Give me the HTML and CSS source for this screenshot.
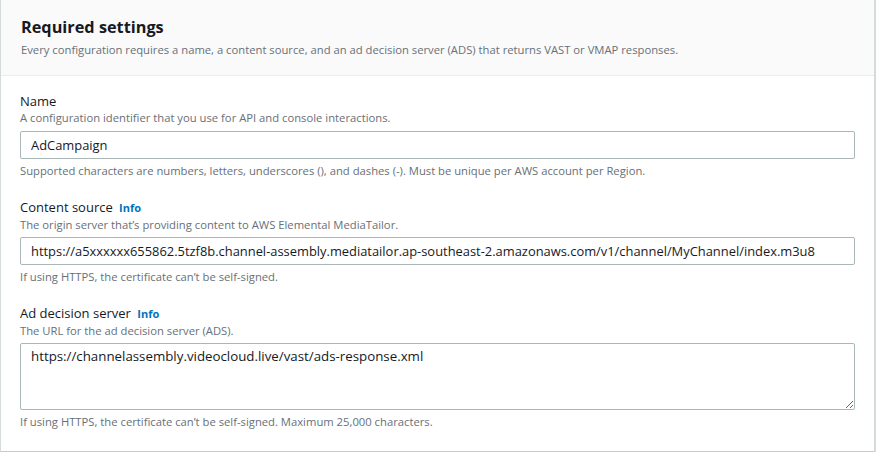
FILE: index.html
```html
<!DOCTYPE html>
<html lang="en">
<head>
<meta charset="utf-8">
<title>Required settings</title>
<link rel="stylesheet" href="styles.css">
</head>
<body>
<div class="card">
  <div class="card-header">
    <h2 class="title">Required settings</h2>
    <p class="subtitle">Every configuration requires a name, a content source, and an ad decision server (ADS) that returns VAST or VMAP responses.</p>
  </div>
  <div class="card-body">
    <div class="field">
      <div class="label">Name</div>
      <div class="desc">A configuration identifier that you use for API and console interactions.</div>
      <input class="input" type="text" value="AdCampaign">
      <div class="hint">Supported characters are numbers, letters, underscores (), and dashes (-). Must be unique per AWS account per Region.</div>
    </div>
    <div class="field">
      <div class="label">Content source <a class="info" href="#">Info</a></div>
      <div class="desc">The origin server that’s providing content to AWS Elemental MediaTailor.</div>
      <input class="input" type="text" value="https://a5xxxxxx655862.5tzf8b.channel-assembly.mediatailor.ap-southeast-2.amazonaws.com/v1/channel/MyChannel/index.m3u8">
      <div class="hint">If using HTTPS, the certificate can’t be self-signed.</div>
    </div>
    <div class="field">
      <div class="label">Ad decision server <a class="info" href="#">Info</a></div>
      <div class="desc">The URL for the ad decision server (ADS).</div>
      <textarea class="textarea">https://channelassembly.videocloud.live/vast/ads-response.xml</textarea>
      <div class="hint">If using HTTPS, the certificate can’t be self-signed. Maximum 25,000 characters.</div>
    </div>
  </div>
</div>
</body>
</html>
```
FILE: styles.css
```css
* { box-sizing: border-box; }
html, body {
  margin: 0;
  padding: 0;
  background: #ffffff;
}
body {
  font-family: "Open Sans", "Liberation Sans", Arial, sans-serif;
  color: #16191f;
  width: 879px;
  height: 452px;
  overflow: hidden;
}
.card {
  width: 876px;
  border-left: 1px solid #d5dbdb;
  border-right: 2px solid #d5dbdb;
  border-bottom: 2px solid #c6cccc;
  background: #ffffff;
}
.card-header {
  background: #fafafa;
  border-bottom: 1px solid #eaeded;
  padding: 15px 20px 17px 20px;
}
.title {
  margin: 0;
  font-size: 16.3px;
  line-height: 24px;
  font-weight: 700;
  color: #16191f;
}
.subtitle {
  margin: 3px 0 0 0;
  font-size: 11.25px;
  line-height: 16px;
  color: #687078;
}
.card-body {
  padding: 16px 20px 21px 19px;
  display: flex;
  flex-direction: column;
  gap: 19px;
}
.field {
  display: flex;
  flex-direction: column;
}
.label {
  font-size: 13px;
  line-height: 18px;
  color: #16191f;
}
.info {
  font-size: 11px;
  font-weight: 700;
  color: #0073bb;
  text-decoration: none;
  margin-left: 3px;
}
.desc {
  font-size: 11.25px;
  line-height: 16px;
  color: #687078;
}
.input, .textarea {
  font-family: inherit;
  font-size: 12.9px;
  color: #16191f;
  width: 835px;
  border: 1px solid #aab7b8;
  border-radius: 2px;
  background: #ffffff;
  margin: 4.5px 0 0 0;
  outline: none;
}
.input {
  height: 28px;
  padding: 0 10px;
}
.textarea {
  font-size: 13.3px;
  height: 67px;
  margin-top: 4px;
  padding: 2px 10px;
  line-height: 20px;
  resize: vertical;
}
.hint {
  margin-top: 4px;
  font-size: 11.25px;
  line-height: 16px;
  color: #687078;
}
```
